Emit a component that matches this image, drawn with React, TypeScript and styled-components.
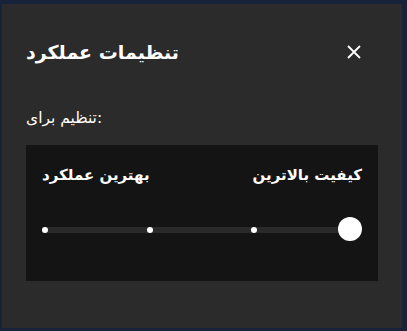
import React from 'react';
import styled, { createGlobalStyle } from 'styled-components';

const GlobalStyle = createGlobalStyle`
  html, body {
    margin: 0;
    padding: 0;
    background: #17233a;
    font-family: "DejaVu Sans", "Noto Sans", sans-serif;
  }
  body {
    width: 407px;
    height: 331px;
    overflow: hidden;
  }
`;

const Dialog = styled.div`
  box-sizing: border-box;
  width: 400px;
  height: 324px;
  margin: 4px 0 0 2px;
  padding: 28px 24px 0;
  background: #2b2b2b;
  color: #ffffff;
  direction: ltr;
`;

const Header = styled.div`
  display: flex;
  align-items: center;
  justify-content: space-between;
  height: 40px;
`;

const Title = styled.h1`
  margin: 0;
  font-size: 19px;
  font-weight: 700;
  line-height: 1;
`;

const CloseButton = styled.button`
  display: flex;
  align-items: center;
  justify-content: center;
  width: 32px;
  height: 32px;
  margin-right: 8px;
  padding: 0;
  border: 0;
  background: transparent;
  color: #ffffff;
  cursor: pointer;
`;

const FieldLabel = styled.div`
  margin-top: 36px;
  font-size: 15.5px;
  line-height: 20px;
`;

const Panel = styled.div`
  box-sizing: border-box;
  width: 352px;
  height: 136px;
  margin-top: 17px;
  padding: 19px 16px 0;
  background: #141414;
`;

const Ends = styled.div`
  display: flex;
  justify-content: space-between;
  align-items: center;
  height: 22px;
`;

const EndLabel = styled.span`
  font-size: 15px;
  font-weight: 600;
  line-height: 22px;
`;

const Slider = styled.div`
  position: relative;
  display: flex;
  align-items: center;
  height: 24px;
  margin-top: 31px;

  &::before {
    content: '';
    position: absolute;
    left: 0;
    right: 12px;
    top: 10px;
    height: 6px;
    background: #2a2a2a;
  }
`;

const Stop = styled.span`
  position: relative;
  flex: 0 0 6px;
  height: 6px;
  margin-top: 2px;
  border-radius: 50%;
  background: #ffffff;

  & + & {
    margin-left: 98.5px;
  }
`;

const Thumb = styled.span`
  position: relative;
  flex: 0 0 24px;
  height: 24px;
  margin-left: auto;
  border-radius: 50%;
  background: #ffffff;
`;

const CloseIcon = () => (
  <svg width="14" height="14" viewBox="0 0 14 14" fill="none">
    <path d="M1 1L13 13M13 1L1 13" stroke="currentColor" strokeWidth="1.8" />
  </svg>
);

const App = () => {
  return (
    <>
      <GlobalStyle />
      <Dialog>
        <Header>
          <Title>تنظیمات عملکرد</Title>
          <CloseButton aria-label="بستن">
            <CloseIcon />
          </CloseButton>
        </Header>
        <FieldLabel>تنظیم برای:</FieldLabel>
        <Panel>
          <Ends>
            <EndLabel>بهترین عملکرد</EndLabel>
            <EndLabel>کیفیت بالاترین</EndLabel>
          </Ends>
          <Slider>
            <Stop />
            <Stop />
            <Stop />
            <Thumb />
          </Slider>
        </Panel>
      </Dialog>
    </>
  );
};

export default App;
